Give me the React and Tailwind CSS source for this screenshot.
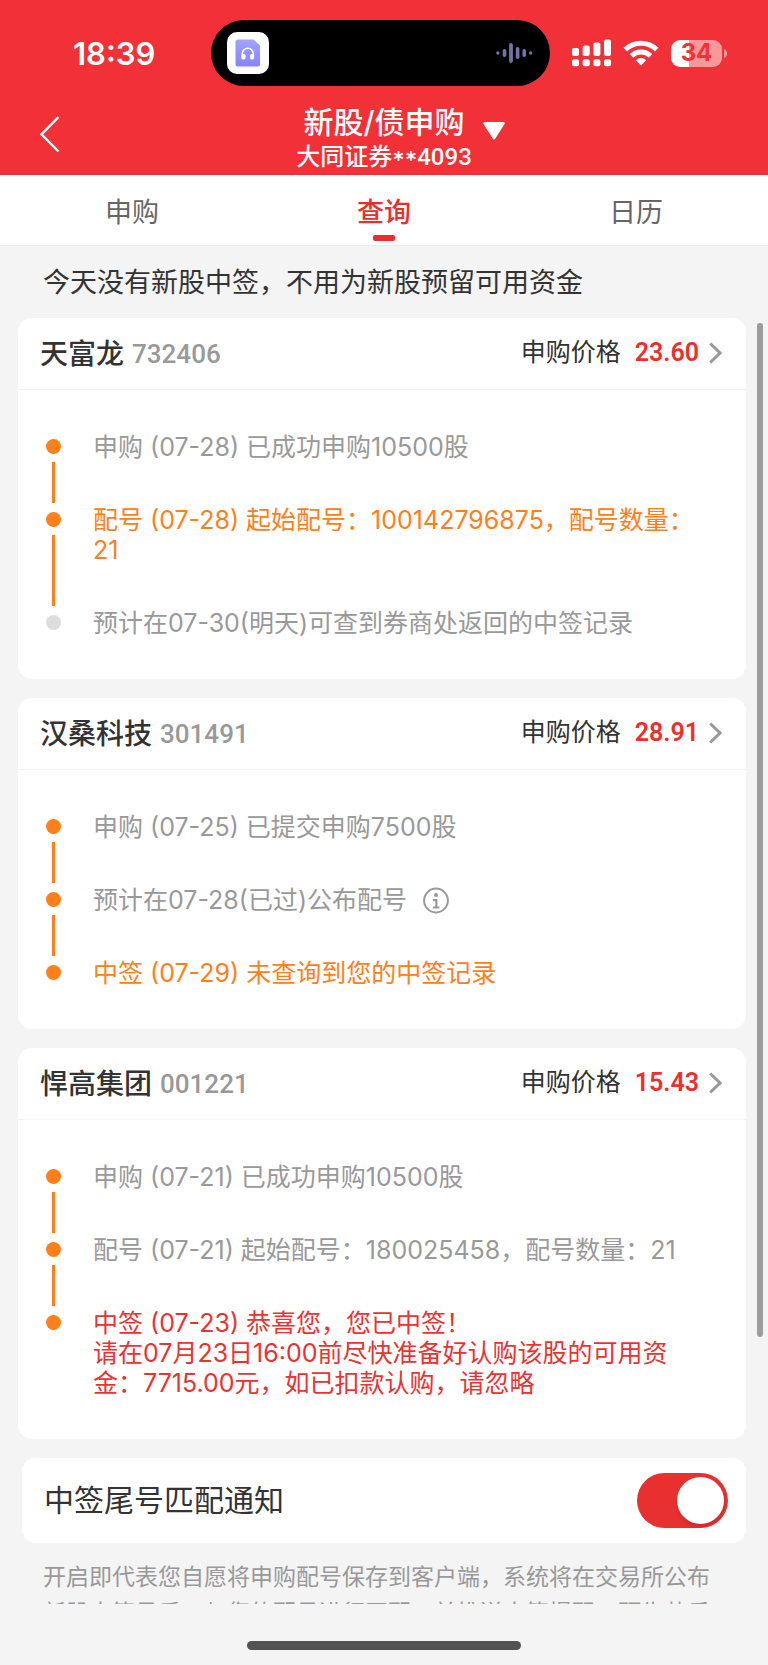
import { useState } from "react";

const stocks = [
  {
    name: "天富龙",
    code: "732406",
    price: "23.60",
    steps: [
      { text: "申购 (07-28) 已成功申购10500股", tone: "text-[#999999]", done: true },
      { text: "配号 (07-28) 起始配号：100142796875，配号数量：21", tone: "text-[#ff801a]", done: true },
      { text: "预计在07-30(明天)可查到券商处返回的中签记录", tone: "text-[#999999]", done: false },
    ],
  },
  {
    name: "汉桑科技",
    code: "301491",
    price: "28.91",
    steps: [
      { text: "申购 (07-25) 已提交申购7500股", tone: "text-[#999999]", done: true },
      { text: "预计在07-28(已过)公布配号", tone: "text-[#999999]", done: true, info: true },
      { text: "中签 (07-29) 未查询到您的中签记录", tone: "text-[#ff801a]", done: true },
    ],
  },
  {
    name: "悍高集团",
    code: "001221",
    price: "15.43",
    steps: [
      { text: "申购 (07-21) 已成功申购10500股", tone: "text-[#999999]", done: true },
      { text: "配号 (07-21) 起始配号：180025458，配号数量：21", tone: "text-[#999999]", done: true },
      {
        text: "中签 (07-23) 恭喜您，您已中签！\n请在07月23日16:00前尽快准备好认购该股的可用资金：7715.00元，如已扣款认购，请忽略",
        tone: "text-[#eb3232]",
        done: true,
      },
    ],
  },
];

function StatusBar() {
  return (
    <div className="grid h-[66px] grid-cols-[1fr_339px_1fr] items-center pr-[7px]">
      <time className="pl-[73px] text-[31px] leading-none font-semibold">18:39</time>
      <div className="flex h-[66px] items-center justify-between rounded-full bg-black px-4">
        <div className="flex size-[42px] items-center justify-center rounded-[10px] bg-white">
          <svg width="26" height="28" viewBox="0 0 26 28" aria-hidden="true">
            <defs>
              <linearGradient id="doc" x1="0" y1="0" x2="0" y2="1">
                <stop offset="0" stopColor="#a3a2fb" />
                <stop offset="1" stopColor="#8584fb" />
              </linearGradient>
            </defs>
            <path d="M3 .5H18.5L25 6.5V25a2.5 2.5 0 0 1-2.5 2.5H3A2.5 2.5 0 0 1 .5 25V3A2.5 2.5 0 0 1 3 .5Z" fill="url(#doc)" />
            <path d="M7.3 19v-4.2a5.5 5.5 0 0 1 11 0V19" fill="none" stroke="#fff" strokeWidth="1.6" />
            <rect x="6.5" y="15" width="4" height="5.5" rx="1.6" fill="#fff" />
            <rect x="15.1" y="15" width="4" height="5.5" rx="1.6" fill="#fff" />
          </svg>
        </div>
        <svg width="38" height="22" viewBox="0 0 38 22" fill="#7474a4" aria-hidden="true">
          <circle cx="1.9" cy="11" r="1.7" />
          <rect x="6.7" y="7" width="3.6" height="8" rx="1.8" />
          <rect x="13.1" y="1" width="3.8" height="20" rx="1.9" />
          <rect x="19.8" y="5" width="3.6" height="12" rx="1.8" />
          <rect x="26.4" y="7" width="3.6" height="8" rx="1.8" />
          <circle cx="34.7" cy="11" r="1.7" />
        </svg>
      </div>
      <div className="flex items-center gap-[9px] pl-[22px]">
        <svg width="40" height="28" viewBox="0 0 40 28" fill="#fff" aria-hidden="true">
          <rect x="0" y="9" width="7" height="8" rx="2" />
          <rect x="10.7" y="6.5" width="7" height="10.5" rx="2" />
          <rect x="21.4" y="3.5" width="7" height="13.5" rx="2" />
          <rect x="32" y=".5" width="7" height="16.5" rx="2" />
          <rect x="0" y="20.3" width="7" height="7" rx="2" />
          <rect x="10.7" y="20.3" width="7" height="7" rx="2" />
          <rect x="21.4" y="20.3" width="7" height="7" rx="2" />
          <rect x="32" y="20.3" width="7" height="7" rx="2" />
        </svg>
        <svg className="ml-[2px]" width="36" height="28" viewBox="0 0 36 28" fill="none" stroke="#fff" strokeWidth="5" aria-hidden="true">
          <path d="M2.3 10.6a22.5 22.5 0 0 1 31.4 0" />
          <path d="M8.5 16.9a13.8 13.8 0 0 1 19 0" />
          <path d="M18 26.5l-5.2-5.3a7.5 7.5 0 0 1 10.4 0Z" fill="#fff" stroke="none" />
        </svg>
        <div className="ml-[3px] flex items-center gap-[2px]">
          <div className="flex h-[27px] w-[51px] items-center justify-center rounded-[9px] bg-linear-to-r from-white from-35% to-[#f9989b] to-35% text-2xl leading-none font-bold text-[#f23037]">
            34
          </div>
          <svg width="3" height="9" viewBox="0 0 3 9" fill="#f9989b" aria-hidden="true">
            <path d="M0 0C2 .8 3 2.5 3 4.5S2 8.2 0 9Z" />
          </svg>
        </div>
      </div>
    </div>
  );
}

function Header() {
  return (
    <header className="shrink-0 bg-[#f23037] pt-5 pb-[3px] text-white">
      <StatusBar />
      <div className="grid grid-cols-[1fr_auto_1fr] gap-x-[11px] pt-[18px]">
        <button type="button" aria-label="返回" className="ml-10 w-5 self-start pt-3">
          <svg width="20" height="36" viewBox="0 0 20 36" fill="none" stroke="#fff" strokeWidth="2.4" aria-hidden="true">
            <path d="M18.5 1 1.500 18.3 18.5 35.5" />
          </svg>
        </button>
        <div className="flex flex-col items-center gap-[2px]">
          <h1 className="text-[30px] leading-9 font-medium">新股/债申购</h1>
          <p className="flex h-[30px] items-center text-2xl leading-[30px] font-medium">
            大同证券<span className="pt-2">**</span>
            <span className="font-[Roboto]">4093</span>
          </p>
        </div>
        <button type="button" aria-label="切换账户" className="w-[22px] self-start pt-[18px]">
          <svg width="22" height="18" viewBox="0 0 22 18" fill="#fff" aria-hidden="true">
            <path d="M1.5 0H20.5Q22.3 .3 21.5 2L12 17Q11 18.2 10 17L.5 2Q-.3 .3 1.5 0Z" />
          </svg>
        </button>
      </div>
    </header>
  );
}

function Tabs({ active, onChange }) {
  return (
    <nav className="flex h-[71px] shrink-0 border-b border-[#ebebeb] bg-white px-1.5">
      {["申购", "查询", "日历"].map((tab) => (
        <button
          key={tab}
          type="button"
          onClick={() => onChange(tab)}
          className={
            tab === active
              ? "flex flex-1 flex-col items-center pt-5 text-[27px] leading-9 font-medium text-[#eb2d2d]"
              : "flex flex-1 flex-col items-center pt-5 text-[27px] leading-9 text-[#666666]"
          }
        >
          {tab}
          {tab === active && <span className="mt-1 h-[6px] w-[22px] rounded-[2px] bg-[#eb2d2d]" />}
        </button>
      ))}
    </nav>
  );
}

function InfoButton() {
  return (
    <button type="button" aria-label="配号说明" className="ml-4">
      <svg width="26" height="27" viewBox="0 0 26 27" fill="none" aria-hidden="true">
        <circle cx="13" cy="13.5" r="11.9" stroke="#999" strokeWidth="2" />
        <circle cx="13" cy="8" r="2.1" fill="#999" />
        <path d="M10 13.2h3.3v7.3M9.8 20.5h6.6" stroke="#999" strokeWidth="2.2" />
      </svg>
    </button>
  );
}

function Step({ step, last }) {
  return (
    <li className="flex gap-8">
      <div className="flex w-[15px] shrink-0 flex-col items-center pt-[7px]">
        <span className={step.done ? "size-[15px] rounded-full bg-[#ff801a]" : "size-[15px] rounded-full bg-[#dddddd]"} />
        {!last && <span className="mt-2 mb-[2px] w-[3px] flex-1 bg-[#ff801a]" />}
      </div>
      <div className={last ? "flex items-center" : "flex items-center pb-[43px]"}>
        <p className={`text-[25px] leading-[30px] whitespace-pre-line ${step.tone}`}>{step.text}</p>
        {step.info && <InfoButton />}
      </div>
    </li>
  );
}

function StockCard({ stock }) {
  return (
    <article className="rounded-[14px] bg-white">
      <a href="#detail" className="flex h-[72px] items-center justify-between border-b border-[#f3f3f3] pr-6 pb-[2px] pl-[22px]">
        <h2 className="flex items-center gap-2 pt-[2px] text-[28px] leading-9 font-medium text-[#333333]">
          {stock.name}
          <span className="font-[Roboto] text-[26px] text-[#999999]">{stock.code}</span>
        </h2>
        <span className="flex items-center text-[25px] text-[#333333]">
          申购价格
          <span className="ml-3.5 font-[Roboto] font-semibold text-[#f02d2d]">{stock.price}</span>
          <svg className="ml-[10px]" width="13" height="22" viewBox="0 0 13 22" fill="none" stroke="#999" strokeWidth="3" aria-hidden="true">
            <path d="M1.2 1.5 11 11 1.2 20.5" />
          </svg>
        </span>
      </a>
      <ol className="flex flex-col pt-[42px] pr-10 pb-[41px] pl-7">
        {stock.steps.map((step, i) => (
          <Step key={step.text} step={step} last={i === stock.steps.length - 1} />
        ))}
      </ol>
    </article>
  );
}

export default function App() {
  const [tab, setTab] = useState("查询");
  const [notify, setNotify] = useState(true);

  return (
    <div className="flex h-screen flex-col overflow-hidden bg-[#f4f4f4] font-[Inter,'Noto_Sans_CJK_SC',sans-serif]">
      <Header />
      <Tabs active={tab} onChange={setTab} />
      <main className="relative min-h-0 flex-1 overflow-hidden pr-[22px] pl-[18px]">
        <p className="flex h-[72px] items-center pt-[2px] pl-[25px] text-[27px] text-[#333333]">
          今天没有新股中签，不用为新股预留可用资金
        </p>
        <div className="flex flex-col gap-[19px]">
          {stocks.map((stock) => (
            <StockCard key={stock.code} stock={stock} />
          ))}
          <label className="ml-1 flex h-[85px] items-center justify-between rounded-[14px] bg-white pr-[18px] pl-[22px] text-[30px] text-[#333333]">
            中签尾号匹配通知
            <input
              type="checkbox"
              role="switch"
              checked={notify}
              onChange={(e) => setNotify(e.target.checked)}
              className="h-[55px] w-[91px] appearance-none rounded-full bg-[#cccccc] p-1 before:block before:size-[47px] before:rounded-full before:bg-white before:shadow-md checked:bg-[#e93030] checked:before:ml-9"
            />
          </label>
        </div>
        <p className="pt-4 pr-[34px] pl-[25px] text-[23px] leading-9 text-[#999999]">
          开启即代表您自愿将申购配号保存到客户端，系统将在交易所公布新股中签号后，与您的配号进行匹配，并推送中签提醒，预告若乐
        </p>
        <div className="absolute top-[77px] right-[5px] h-[1014px] w-[6px] rounded-full bg-[#9c9c9c]" />
      </main>
      <footer className="flex h-[61px] shrink-0 items-end justify-center pb-[15px]">
        <div className="h-[9px] w-[274px] rounded-full bg-[#525252]" />
      </footer>
    </div>
  );
}
